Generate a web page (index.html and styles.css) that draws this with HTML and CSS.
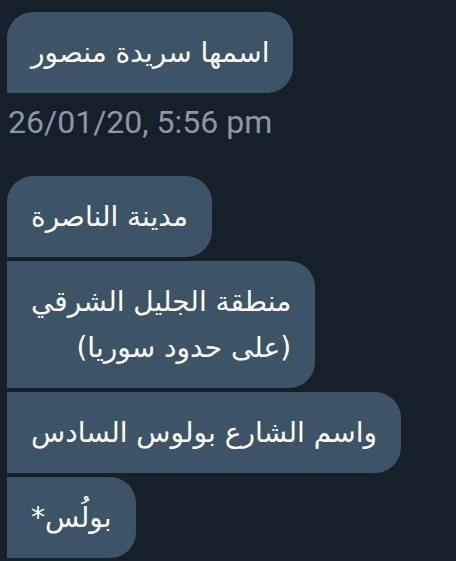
FILE: index.html
```html
<!DOCTYPE html>
<html lang="ar">
<head>
<meta charset="utf-8">
<link rel="stylesheet" href="styles.css">
</head>
<body>
<div class="thread">
  <div class="group">
    <div class="bubble first last" dir="rtl">اسمها سريدة منصور</div>
  </div>
  <div class="time">26/01/20, 5:56 pm</div>
  <div class="group second">
    <div class="bubble first" dir="rtl">مدينة الناصرة</div>
    <div class="bubble" dir="rtl">منطقة الجليل الشرقي<br>(على حدود سوريا)</div>
    <div class="bubble" dir="rtl">واسم الشارع بولوس السادس</div>
    <div class="bubble" dir="rtl">بولُس*</div>
  </div>
</div>
</body>
</html>
```
FILE: styles.css
```css
html, body {
  margin: 0;
  padding: 0;
  background: #16202b;
}
.thread {
  padding: 12px 0 0 7px;
  display: flex;
  flex-direction: column;
}
.group {
  display: flex;
  flex-direction: column;
  align-items: flex-start;
  gap: 4px;
}
.second {
  margin-top: 36px;
}
.bubble {
  background: #3d5366;
  color: #ffffff;
  font-family: "DejaVu Sans", sans-serif;
  font-size: 28px;
  line-height: 46px;
  padding: 17.5px 24px;
  border-radius: 0 26px 26px 0;
}
.bubble.first {
  border-top-left-radius: 26px;
}
.time {
  margin-top: 11px;
  padding-left: 1px;
  font-family: Roboto, sans-serif;
  font-size: 32px;
  line-height: 36px;
  color: #8b98a5;
}
```
